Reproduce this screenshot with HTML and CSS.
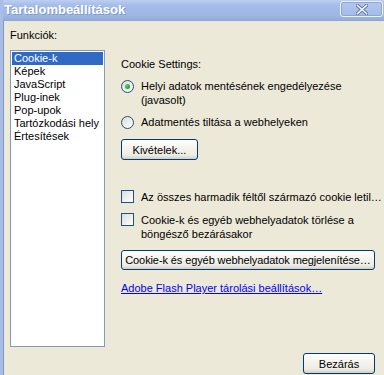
FILE: index.html
```html
<!DOCTYPE html>
<html lang="hu">
<head>
    <meta charset="UTF-8">
    <meta name="viewport" content="width=device-width, initial-scale=1.0">
    <title>Tartalombeállítások</title>
    <link rel="stylesheet" href="styles.css">
</head>
<body>
    <div class="window">
        <div class="titlebar">
            <span class="title">Tartalombeállítások</span>
            <button class="close" aria-label="Bezárás">
                <svg width="12" height="11" viewBox="0 0 12 11">
                    <path d="M1.5 1.5 L10.5 9.5 M10.5 1.5 L1.5 9.5" stroke="#5f739c" stroke-width="3.4" stroke-linecap="square" fill="none"/>
                    <path d="M1.5 1.5 L10.5 9.5 M10.5 1.5 L1.5 9.5" stroke="#f2f5fb" stroke-width="1.6" stroke-linecap="square" fill="none"/>
                </svg>
            </button>
        </div>
        <div class="content">
            <div class="label">Funkciók:</div>
            <div class="main">
                <ul class="list">
                    <li class="selected">Cookie-k</li>
                    <li>Képek</li>
                    <li>JavaScript</li>
                    <li>Plug-inek</li>
                    <li>Pop-upok</li>
                    <li>Tartózkodási hely</li>
                    <li>Értesítések</li>
                </ul>
                <div class="panel">
                    <div class="heading">Cookie Settings:</div>
                    <label class="option first">
                        <span class="radio checked"></span>
                        <span>Helyi adatok mentésének engedélyezése<br>(javasolt)</span>
                    </label>
                    <label class="option second">
                        <span class="radio"></span>
                        <span>Adatmentés tiltása a webhelyeken</span>
                    </label>
                    <button class="btn exceptions">Kivételek...</button>
                    <label class="option check-first">
                        <span class="checkbox"></span>
                        <span>Az összes harmadik féltől származó cookie letil…</span>
                    </label>
                    <label class="option check-second">
                        <span class="checkbox"></span>
                        <span>Cookie-k és egyéb webhelyadatok törlése a<br>böngésző bezárásakor</span>
                    </label>
                    <button class="btn wide">Cookie-k és egyéb webhelyadatok megjelenítése…</button>
                    <a class="link" href="#">Adobe Flash Player tárolási beállítások…</a>
                </div>
            </div>
            <div class="footer">
                <button class="btn close-btn">Bezárás</button>
            </div>
        </div>
    </div>
</body>
</html>
```

FILE: styles.css
```css
body {
    margin: 0;
    font-family: "Liberation Sans", Arial, sans-serif;
    font-size: 11px;
    color: #000;
    background: #ece9d8;
}
.window {
    width: 384px;
    height: 375px;
    display: flex;
    flex-direction: column;
    background: #ece9d8;
    border-left: 3px solid #a9bde6;
    box-shadow: inset 1px 0 0 #7d97cc;
    box-sizing: border-box;
    overflow: hidden;
}
.titlebar {
    height: 21px;
    margin-left: -3px;
    display: flex;
    align-items: center;
    justify-content: space-between;
    padding: 0 1px 0 4px;
    background: linear-gradient(#bccff1, #a6bde9 25%, #9db6e5 80%, #93acdb);
    border-bottom: 1px solid #8ea6d6;
    box-sizing: border-box;
}
.title {
    font-size: 13px;
    font-weight: bold;
    color: #fff;
    text-shadow: 1px 1px 0 #7f97c8;
    padding-bottom: 1px;
}
.close {
    width: 43px;
    height: 16px;
    margin-bottom: 2px;
    padding: 0;
    display: flex;
    align-items: center;
    justify-content: center;
    background: linear-gradient(#b3c7ee, #a3bbe8);
    border: 1px solid #eef2fa;
    border-radius: 3px;
    box-shadow: 0 0 0 1px #8fa6d4 inset;
}
.content {
    flex: 1;
    display: flex;
    flex-direction: column;
    padding: 7px 0 0 7px;
}
.label {
    line-height: 14px;
}
.main {
    display: flex;
    margin-top: 8px;
}
.list {
    margin: 0;
    padding: 1px;
    list-style: none;
    width: 95px;
    height: 297px;
    box-sizing: border-box;
    background: #fff;
    border: 1px solid #7f9db9;
}
.list li {
    line-height: 13px;
    padding-left: 2px;
}
.list .selected {
    background: #316ac5;
    color: #fff;
}
.panel {
    flex: 1;
    display: flex;
    flex-direction: column;
    align-items: flex-start;
    padding: 7px 0 0 16px;
}
.heading {
    line-height: 14px;
}
.option {
    display: flex;
    align-items: flex-start;
    gap: 7px;
    line-height: 14px;
}
.option.first {
    margin-top: 8px;
}
.option.second {
    margin-top: 8px;
}
.option.check-first {
    margin-top: 30px;
}
.option.check-second {
    margin-top: 9px;
}
.radio {
    width: 13px;
    height: 13px;
    margin-top: 1px;
    flex: none;
    box-sizing: border-box;
    border: 1px solid #1c5180;
    border-radius: 50%;
    background: linear-gradient(135deg, #dcdcd5, #fff);
    display: flex;
    align-items: center;
    justify-content: center;
}
.radio.checked::after {
    content: "";
    width: 5px;
    height: 5px;
    border-radius: 50%;
    background: radial-gradient(circle at 35% 35%, #60d060, #21a121 70%);
}
.checkbox {
    width: 13px;
    height: 13px;
    flex: none;
    box-sizing: border-box;
    border: 1px solid #1c5180;
    background: linear-gradient(135deg, #dcdcd7, #fff);
}
.btn {
    font-family: inherit;
    font-size: 11px;
    color: #000;
    height: 21px;
    padding: 0 2px;
    white-space: nowrap;
    box-sizing: border-box;
    border: 1px solid #003c74;
    border-radius: 3px;
    background: linear-gradient(#fff, #f5f4ee 40%, #ecebe4 80%, #d6d0c5);
    box-shadow: inset 0 -1px 0 #d6d0c5;
}
.exceptions {
    margin-top: 10px;
    width: 77px;
}
.wide {
    margin-top: 9px;
    width: 254px;
    height: 20px;
    letter-spacing: -0.1px;
}
.link {
    margin-top: 11px;
    line-height: 14px;
    color: #0000ff;
    text-decoration: underline;
}
.footer {
    display: flex;
    justify-content: flex-end;
    padding-right: 9px;
    margin-top: 6px;
}
.close-btn {
    width: 72px;
}
```
